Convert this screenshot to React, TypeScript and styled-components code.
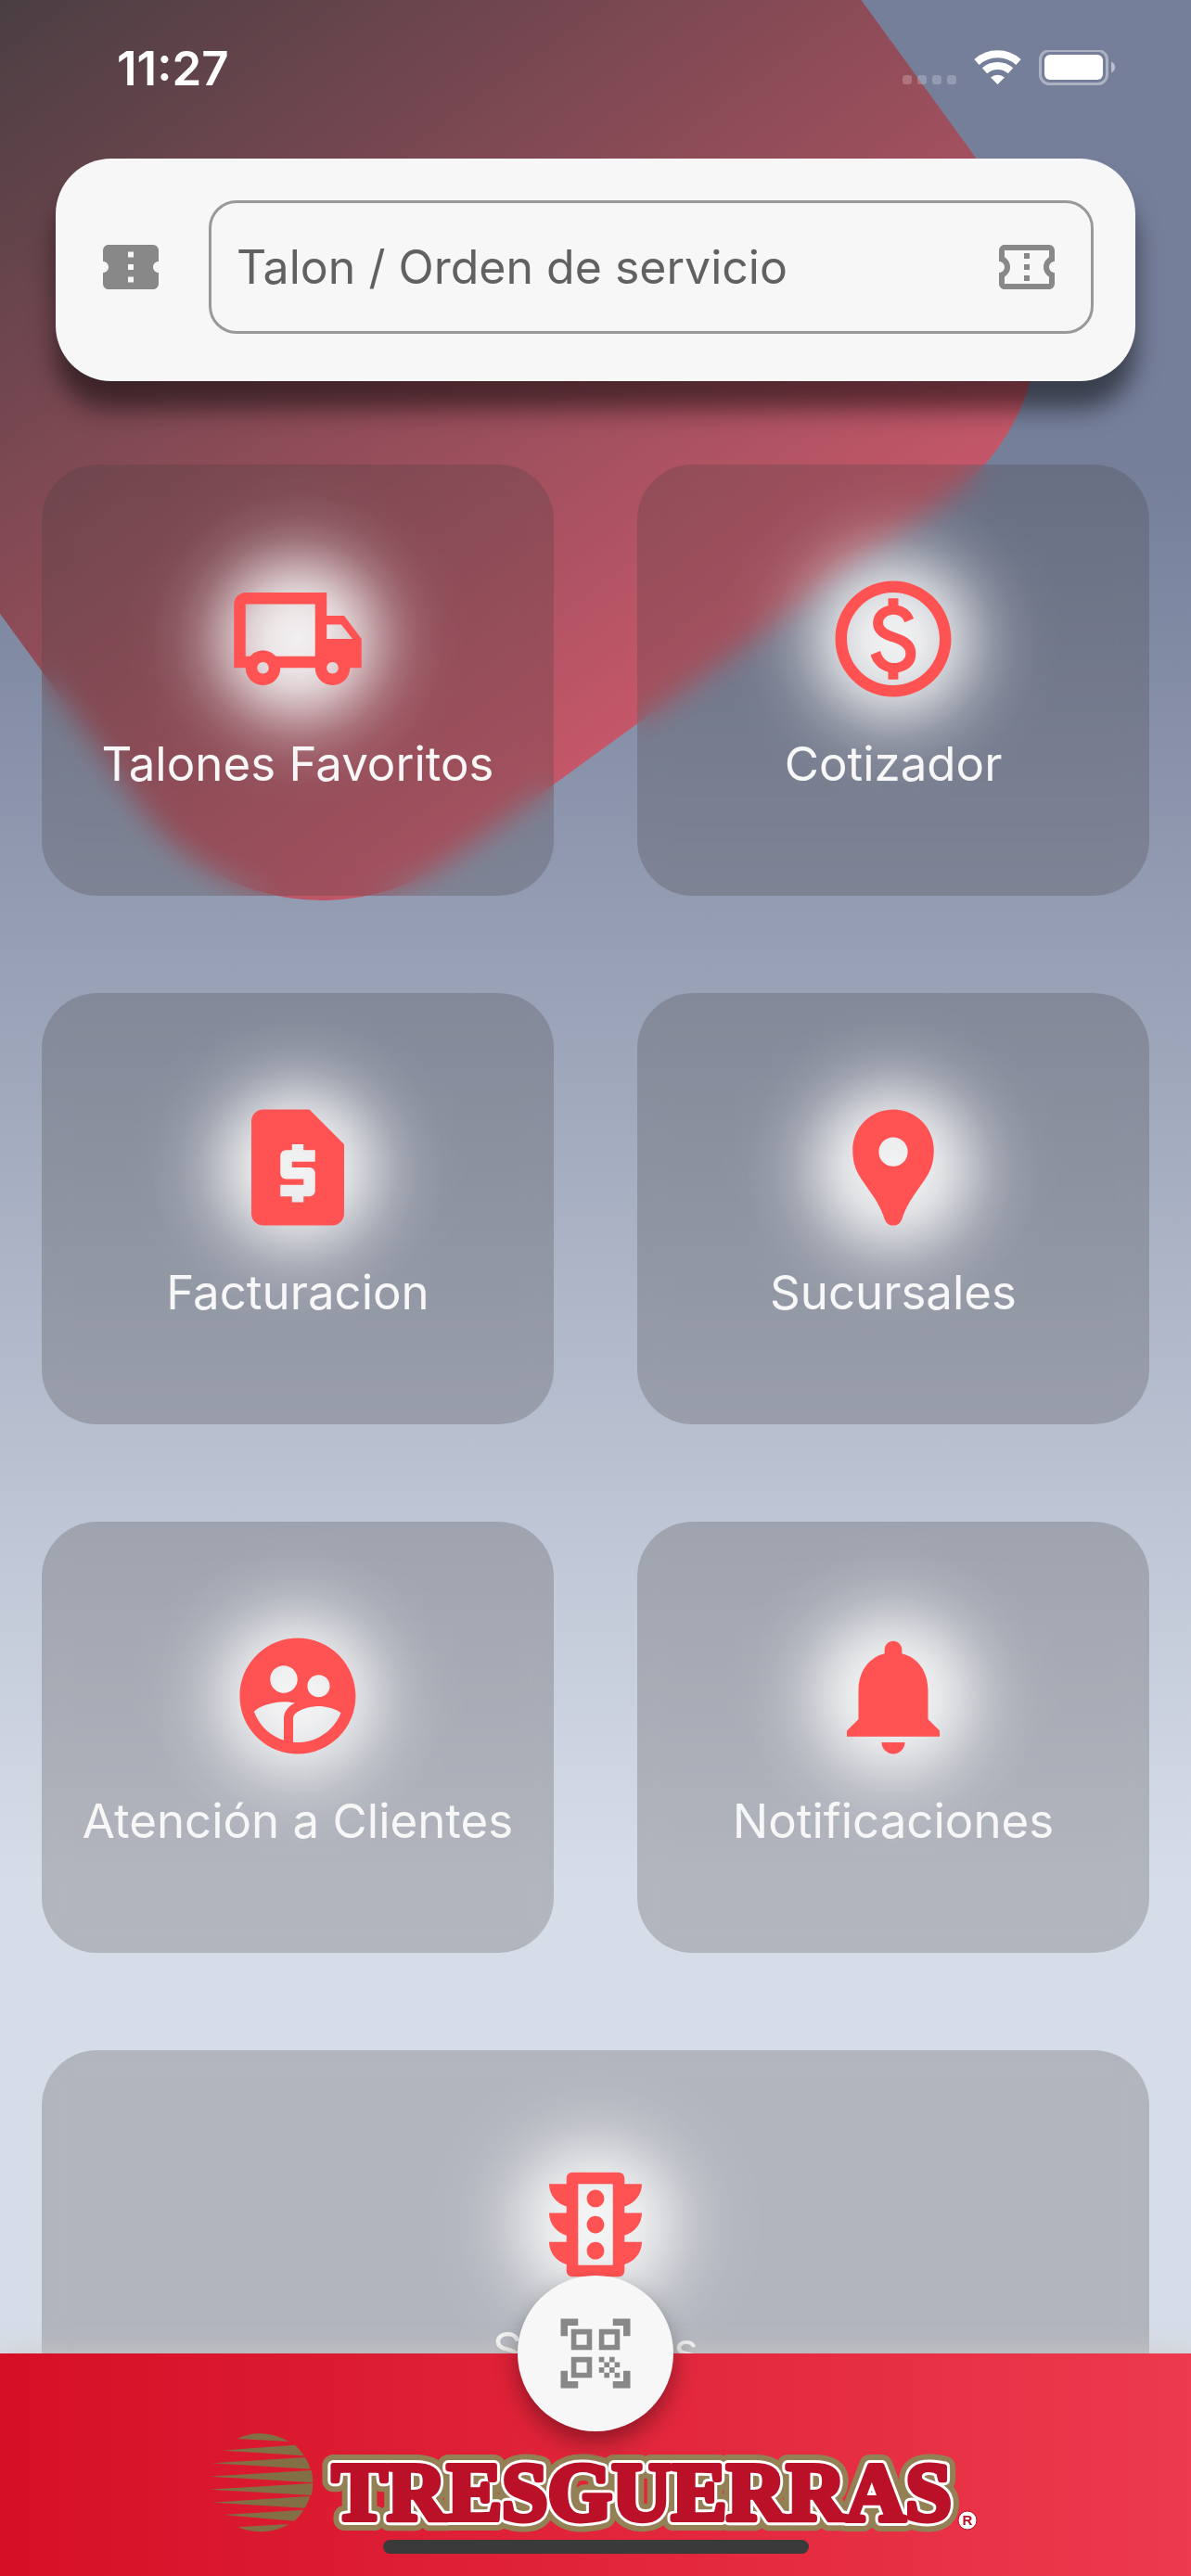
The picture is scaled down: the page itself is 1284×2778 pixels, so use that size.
import React from 'react';
import styled, { createGlobalStyle } from 'styled-components';
import type { IconType } from 'react-icons';
import {
  MdConfirmationNumber,
  MdNotifications,
  MdOutlineConfirmationNumber,
  MdOutlineLocalShipping,
  MdOutlinePaid,
  MdOutlineTraffic,
  MdQrCodeScanner,
  MdRequestPage,
  MdSupervisedUserCircle,
} from 'react-icons/md';

const GlobalStyle = createGlobalStyle`
  *, *::before, *::after { box-sizing: border-box; }
  body {
    margin: 0;
    font-family: Inter, Roboto, "Liberation Sans", sans-serif;
  }
`;

const Screen = styled.div`
  position: relative;
  display: flex;
  flex-direction: column;
  height: 100vh;
  overflow: hidden;
`;

const Backdrop = styled.div`
  position: absolute;
  inset: 0 0 240px;
  overflow: hidden;
  background: linear-gradient(#757f9a 20%, #d7dde8 80%);
`;

const Diamond = styled.div`
  position: absolute;
  top: -300px;
  left: -150px;
  width: 1140px;
  height: 1140px;
  border-radius: 240px;
  background: linear-gradient(#3e3c3f, #c45769);
  transform: rotate(-36deg);
`;

const StatusBar = styled.header`
  position: relative;
  display: flex;
  flex: none;
  align-items: center;
  justify-content: space-between;
  height: 147px;
  padding: 0 81px 0 126px;
  color: #fff;
`;

const Clock = styled.time`
  font-size: 51px;
  font-weight: 600;
  line-height: 60px;
`;

const StatusIcons = styled.svg`
  width: 230px;
  height: 40px;
`;

const Main = styled.main`
  position: relative;
  display: flex;
  flex: 1;
  flex-direction: column;
  gap: 90px;
  min-height: 0;
  padding: 24px 45px 0;
  overflow: hidden;
`;

const SearchCard = styled.form`
  display: flex;
  flex: none;
  align-items: center;
  gap: 48px;
  margin: 0 15px;
  padding: 45px 45px 51px;
  border-radius: 60px;
  background: #f7f7f7;
  box-shadow: 0 30px 27px rgba(0, 0, 0, 0.5);
  color: #888;
`;

const SearchLabel = styled.label`
  display: flex;
`;

const Field = styled.div`
  display: flex;
  flex: 1;
  align-items: center;
  height: 144px;
  padding: 0 33px 0 27px;
  border: 3px solid #999;
  border-radius: 30px;
`;

const FieldInput = styled.input`
  flex: 1;
  min-width: 0;
  height: 100%;
  padding: 0;
  border: 0;
  outline: 0;
  background: transparent;
  color: #616161;
  font-family: inherit;
  font-size: 50px;

  &::placeholder {
    color: #616161;
    opacity: 1;
  }
`;

const Menu = styled.nav`
  display: grid;
  grid-template-columns: 1fr 1fr;
  gap: 105px 90px;
`;

const Tile = styled.button<{ $wide?: boolean }>`
  display: flex;
  flex-direction: column;
  grid-column: ${({ $wide }) => ($wide ? '1 / -1' : 'auto')};
  align-items: center;
  justify-content: center;
  gap: 30px;
  height: 465px;
  padding: 0;
  border: 0;
  border-radius: 60px;
  background: rgba(66, 62, 62, 0.25);
  backdrop-filter: blur(15px);
  color: #f7f7f7;
  font-family: inherit;
  cursor: pointer;
`;

const TileIcon = styled.span`
  position: relative;
  display: flex;
  color: #ff5252;

  &::before {
    content: '';
    position: absolute;
    inset: -113px;
    border-radius: 50%;
    background: radial-gradient(
      closest-side,
      rgba(247, 247, 247, 0.96) 0%,
      rgba(247, 247, 247, 0.9) 16%,
      rgba(247, 247, 247, 0.78) 28%,
      rgba(247, 247, 247, 0.62) 37%,
      rgba(247, 247, 247, 0.4) 48%,
      rgba(247, 247, 247, 0.22) 58%,
      rgba(247, 247, 247, 0.09) 70%,
      rgba(247, 247, 247, 0.02) 84%,
      rgba(247, 247, 247, 0) 100%
    );
  }

  svg {
    position: relative;
  }
`;

const TileLabel = styled.span`
  position: relative;
  font-size: 51px;
  line-height: 60px;
`;

const Footer = styled.footer`
  position: relative;
  display: flex;
  flex: none;
  flex-direction: column;
  align-items: center;
  justify-content: flex-end;
  gap: 6px;
  height: 240px;
  padding-bottom: 24px;
  background: linear-gradient(90deg, #d50f26, #ed3a4e);
  box-shadow: 0 0 27px rgba(204, 200, 192, 0.8);
`;

const ScanButton = styled.button`
  position: absolute;
  top: -84px;
  left: calc(50% - 84px);
  display: flex;
  align-items: center;
  justify-content: center;
  width: 168px;
  height: 168px;
  padding: 0;
  border: 0;
  border-radius: 50%;
  background: #f7f7f7;
  box-shadow: 0 12px 24px rgba(0, 0, 0, 0.35);
  color: #888;
  cursor: pointer;
`;

const Logo = styled.svg`
  width: 846px;
  max-width: 90%;
  height: 117px;
  overflow: visible;
`;

const HomeIndicator = styled.div`
  position: relative;
  width: 459px;
  height: 15px;
  border-radius: 8px;
  background: #3a3a3a;
`;

function PinIcon({ size }: { size: number }) {
  return (
    <svg width={size} height={size} viewBox="0 0 24 24" fill="currentColor" aria-hidden="true">
      <path
        fillRule="evenodd"
        d="M12 2C8.1 2 5 5.100 5 9c0 2.100.5 3.500 1.500 5 .9 1.400 1.900 2.600 2.700 4 .6 1 1 2 1.300 2.900.3.700.7 1.100 1.500 1.100s1.200-.4 1.500-1.100c.3-.9.7-1.900 1.300-2.900.8-1.400 1.800-2.600 2.700-4C18.500 12.500 19 11.100 19 9c0-3.900-3.100-7-7-7zm0 9.800a2.500 2.500 0 1 1 0-5 2.500 2.500 0 0 1 0 5z"
      />
    </svg>
  );
}

type MenuEntry = { label: string; Icon: IconType | typeof PinIcon; wide?: boolean };

const entries: MenuEntry[] = [
  { label: 'Talones Favoritos', Icon: MdOutlineLocalShipping },
  { label: 'Cotizador', Icon: MdOutlinePaid },
  { label: 'Facturacion', Icon: MdRequestPage },
  { label: 'Sucursales', Icon: PinIcon },
  { label: 'Atención a Clientes', Icon: MdSupervisedUserCircle },
  { label: 'Notificaciones', Icon: MdNotifications },
  { label: 'Servicios', Icon: MdOutlineTraffic, wide: true },
];

function DeviceStatus() {
  return (
    <StatusIcons viewBox="973 54 230 40" aria-hidden="true">
      {[973, 989, 1005, 1021].map((x) => (
        <rect key={x} x={x} y="81" width="10" height="10" rx="3" fill="#fff" opacity=".22" />
      ))}
      <g fill="none" stroke="#fff" strokeWidth="8">
        <path d="M1053 67A33.500 33.500 0 0 1 1098 67" />
        <path d="M1061.500 76.300A21 21 0 0 1 1089.500 76.300" />
      </g>
      <path d="M1068 83.500A11.500 11.500 0 0 1 1083 83.500L1075.500 91z" fill="#fff" />
      <rect x="1121.500" y="54.500" width="72" height="36" rx="10" fill="none" stroke="#fff" strokeOpacity=".4" strokeWidth="3" />
      <rect x="1126" y="59" width="63" height="27" rx="6" fill="#fff" />
      <path d="M1198 66.500C1203.500 69 1203.500 76 1198 78.500z" fill="#fff" opacity=".5" />
    </StatusIcons>
  );
}

function Wordmark() {
  const word = {
    x: 139,
    y: 101,
    fontFamily: '"Liberation Serif", serif',
    fontSize: 89,
    fontWeight: 700,
    strokeLinejoin: 'round' as const,
  };
  return (
    <Logo viewBox="0 0 846 117" role="img" aria-label="Tresguerras">
      <g transform="translate(0 -6) scale(.33333)" fill="#836f45">
        <path d="M110 60Q145 43 185 43Q236 45 278 69z" />
        <path d="M62 98L297 80Q314 95 326 115z" />
        <path d="M28 139L330 120Q341 138 347 158z" />
        <path d="M20 182L350 162Q355 182 355 202z" />
        <path d="M20 224L355 204Q355 224 350 243z" />
        <path d="M28 266L346 246Q340 267 328 284z" />
        <path d="M65 306L325 290Q312 312 295 326z" />
        <path d="M112 346L278 336Q235 361 185 361Q145 360 112 346z" />
      </g>
      <g aria-hidden="true">
        <text {...word} fill="#938054" stroke="#938054" strokeWidth="24">TRESGUERRAS</text>
        <text {...word} fill="#fff" stroke="#fff" strokeWidth="12">TRESGUERRAS</text>
        <text {...word} fill="#bb1128" stroke="#bb1128" strokeWidth="6">TRESGUERRAS</text>
      </g>
      <circle cx="824" cy="102" r="10" fill="#fff" stroke="#bb1128" />
      <text x="824" y="107" fill="#bb1128" fontFamily='"Liberation Sans", sans-serif' fontSize="15" fontWeight="700" textAnchor="middle">
        R
      </text>
    </Logo>
  );
}

export default function App() {
  return (
    <>
      <GlobalStyle />
      <Screen>
        <Backdrop>
          <Diamond />
        </Backdrop>
        <StatusBar>
          <Clock>11:27</Clock>
          <DeviceStatus />
        </StatusBar>
        <Main>
          <SearchCard>
            <SearchLabel htmlFor="talon" aria-label="Talon / Orden de servicio">
              <MdConfirmationNumber size={72} />
            </SearchLabel>
            <Field>
              <FieldInput id="talon" type="text" placeholder="Talon / Orden de servicio" />
              <MdOutlineConfirmationNumber size={72} />
            </Field>
          </SearchCard>
          <Menu>
            {entries.map(({ label, Icon, wide }) => (
              <Tile key={label} type="button" $wide={wide}>
                <TileIcon>
                  <Icon size={150} />
                </TileIcon>
                <TileLabel>{label}</TileLabel>
              </Tile>
            ))}
          </Menu>
        </Main>
        <Footer>
          <ScanButton type="button" aria-label="Escanear código QR">
            <MdQrCodeScanner size={90} />
          </ScanButton>
          <Wordmark />
          <HomeIndicator />
        </Footer>
      </Screen>
    </>
  );
}
